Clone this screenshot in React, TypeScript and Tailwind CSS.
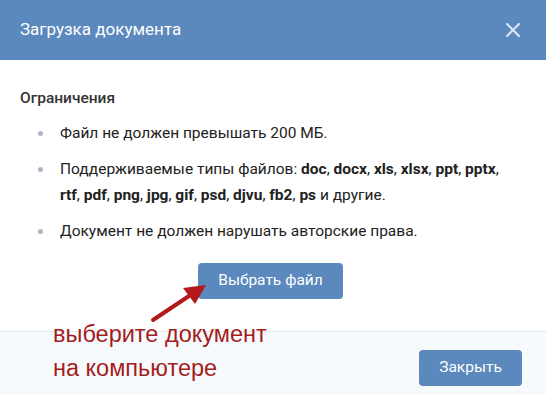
import React from 'react'

const items: React.ReactNode[] = [
  <>Файл не должен превышать 200 МБ.</>,
  <>
    Поддерживаемые типы файлов: <b>doc</b>, <b>docx</b>, <b>xls</b>, <b>xlsx</b>, <b>ppt</b>, <b>pptx</b>,{' '}
    <b>rtf</b>, <b>pdf</b>, <b>png</b>, <b>jpg</b>, <b>gif</b>, <b>psd</b>, <b>djvu</b>, <b>fb2</b>, <b>ps</b> и другие.
  </>,
  <>Документ не должен нарушать авторские права.</>,
]

export default function App() {
  return (
    <div className="relative h-[395px] w-[546px] overflow-hidden bg-white font-['Roboto',sans-serif] text-[#222]">
      <div className="flex h-[60px] items-center justify-between bg-[#5b88bd] pl-5 pr-[26px]">
        <span className="text-[17px] text-white">Загрузка документа</span>
        <svg width="14" height="14" viewBox="0 0 14 14" className="text-[#dbe6f3]">
          <path d="M1 1L13 13M13 1L1 13" stroke="currentColor" strokeWidth="2.2" strokeLinecap="round" />
        </svg>
      </div>

      <div className="border-b border-[#e7e8ec] px-5 pt-7 pb-8">
        <div className="text-[15.5px] font-medium leading-5 text-[#333]">Ограничения</div>
        <ul className="mt-3">
          {items.map((it, i) => (
            <li key={i} className="mb-[10px] flex text-[15.5px] leading-[26px] last:mb-0">
              <span className="ml-[18px] mr-[17px] mt-[11px] h-[5px] w-[5px] shrink-0 rounded-full bg-[#aab6c3]" />
              <span className="pr-4">{it}</span>
            </li>
          ))}
        </ul>
        <div className="mt-[19px] mr-[5px] flex justify-center">
          <button className="h-9 w-[145px] rounded-[4px] bg-[#5b88bd] text-[15.5px] text-white">Выбрать файл</button>
        </div>
      </div>

      <div className="flex h-[64px] justify-end bg-[#f7fafc] pt-[18px] pr-6">
        <button className="h-9 w-[103px] rounded-[4px] bg-[#5b88bd] text-[15.5px] text-white">Закрыть</button>
      </div>

      <svg className="absolute left-0 top-0" width="546" height="395" viewBox="0 0 546 395">
        <line x1="153" y1="320" x2="192" y2="294" stroke="#b3191b" strokeWidth="4" strokeLinecap="round" />
        <polygon points="206,285 183,288 195,304" fill="#b3191b" />
      </svg>

      <div className="absolute left-[53px] top-[317px] font-['Liberation_Sans',Arial,sans-serif] text-[23.5px] leading-[34px] text-[#a41d1d]">
        выберите документ
        <br />
        на компьютере
      </div>
    </div>
  )
}
